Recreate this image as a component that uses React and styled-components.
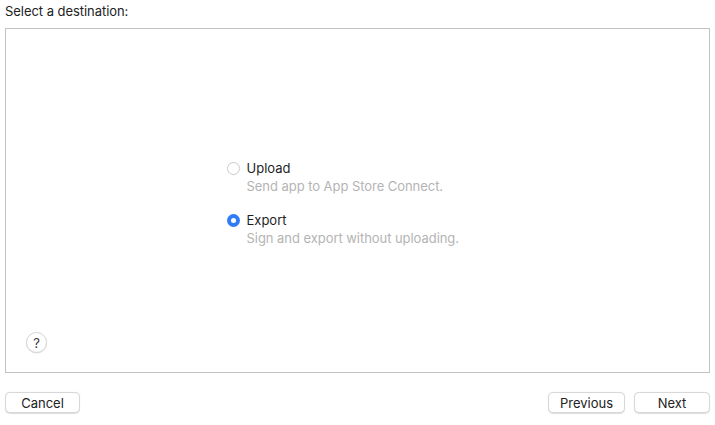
import React, { useState } from 'react';
import styled, { createGlobalStyle } from 'styled-components';

const GlobalStyle = createGlobalStyle`
  html, body {
    margin: 0;
    padding: 0;
    background: #ffffff;
  }
  body {
    font-family: Inter, "Liberation Sans", Arial, sans-serif;
    font-size: 13px;
    color: #222222;
    -webkit-font-smoothing: antialiased;
  }
`;

const Page = styled.div`
  width: 715px;
  height: 425px;
  box-sizing: border-box;
  padding: 0 5px;
  display: flex;
  flex-direction: column;
`;

const Title = styled.div`
  height: 29px;
  line-height: 24px;
  margin-top: -1px;
  letter-spacing: -0.05px;
`;

const Panel = styled.div`
  height: 345px;
  box-sizing: border-box;
  border: 1px solid #c2c2c2;
  display: flex;
  flex-direction: column;
`;

const Center = styled.div`
  flex: 1;
  display: flex;
  align-items: center;
  justify-content: center;
  padding-top: 44px;
`;

const Group = styled.div`
  width: 262px;
  display: flex;
  flex-direction: column;
  gap: 18px;
`;

const Option = styled.label`
  display: grid;
  grid-template-columns: 13px 1fr;
  column-gap: 7px;
  row-gap: 1px;
  cursor: default;
`;

const Radio = styled.span`
  width: 13px;
  height: 13px;
  box-sizing: border-box;
  border-radius: 50%;
  margin-top: 2px;
  border: ${p => (p.$on ? 'none' : '1px solid #cacaca')};
  background: ${p => (p.$on ? '#2f7cf6' : '#ffffff')};
  display: flex;
  align-items: center;
  justify-content: center;
  &::after {
    content: '';
    width: 5px;
    height: 5px;
    border-radius: 50%;
    background: #ffffff;
    display: ${p => (p.$on ? 'block' : 'none')};
  }
`;

const Label = styled.span`
  color: #1f1f1f;
  line-height: 17px;
`;

const Hint = styled.span`
  grid-column: 2;
  color: #b4b4b4;
  line-height: 16px;
  letter-spacing: -0.05px;
`;

const PanelFooter = styled.div`
  padding: 0 0 19px 20px;
`;

const HelpButton = styled.button`
  width: 21px;
  height: 21px;
  border-radius: 50%;
  border: 1px solid #d6d6d6;
  background: #ffffff;
  box-shadow: 0 0.5px 1px rgba(0, 0, 0, 0.12);
  font-family: inherit;
  font-size: 13px;
  color: #333333;
  padding: 0;
  display: flex;
  align-items: center;
  justify-content: center;
`;

const Footer = styled.div`
  display: flex;
  align-items: center;
  padding-top: 19px;
  gap: 9px;
`;

const Spacer = styled.div`
  flex: 1;
`;

const Button = styled.button`
  width: ${p => p.$w}px;
  height: 21px;
  box-sizing: border-box;
  border: 1px solid #d8d8d8;
  border-radius: 5px;
  background: #ffffff;
  box-shadow: 0 0.5px 1px rgba(0, 0, 0, 0.14);
  font-family: inherit;
  font-size: 13px;
  color: #222222;
  padding: 0;
`;

const options = [
  { id: 'upload', label: 'Upload', hint: 'Send app to App Store Connect.' },
  { id: 'export', label: 'Export', hint: 'Sign and export without uploading.' },
];

export default function App() {
  const [choice, setChoice] = useState('export');

  return (
    <Page>
      <GlobalStyle />
      <Title>Select a destination:</Title>
      <Panel>
        <Center>
          <Group>
            {options.map(o => (
              <Option key={o.id} onClick={() => setChoice(o.id)}>
                <Radio $on={choice === o.id} />
                <Label>{o.label}</Label>
                <Hint>{o.hint}</Hint>
              </Option>
            ))}
          </Group>
        </Center>
        <PanelFooter>
          <HelpButton>?</HelpButton>
        </PanelFooter>
      </Panel>
      <Footer>
        <Button $w={75}>Cancel</Button>
        <Spacer />
        <Button $w={77}>Previous</Button>
        <Button $w={76}>Next</Button>
      </Footer>
    </Page>
  );
}
